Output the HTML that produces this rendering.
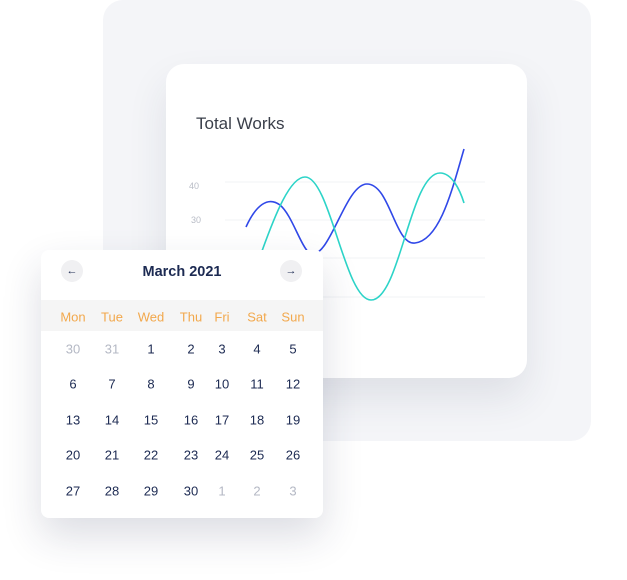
<!DOCTYPE html>
<html><head><style>
body{margin:0;width:627px;height:580px;background:#fff;position:relative;overflow:hidden;font-family:"Liberation Sans",sans-serif}
.bg{position:absolute;left:103px;top:0;width:488px;height:441px;background:#f4f5f8;border-radius:20px}
.chart{position:absolute;left:166px;top:64px;width:361px;height:314px;background:#fff;border-radius:18px;box-shadow:0 20px 40px rgba(40,45,80,.10)}
.title{position:absolute;left:196px;top:114px;font-size:17px;color:#3a3f4a}
.cal{position:absolute;left:41px;top:250px;width:282px;height:268px;background:#fff;border-radius:8px;box-shadow:0 18px 40px rgba(40,45,80,.16);overflow:hidden}
.wk{position:absolute;left:0;top:50px;width:282px;height:31px;background:#f5f5f5}
.t{position:absolute;transform:translate(-50%,-50%);font-size:13px;color:#1c2a52;white-space:nowrap}
.o{color:#f2a84c;font-size:13px}
.g{color:#b4b8c4}
.btn{position:absolute;width:22px;height:22px;border-radius:50%;background:#f0f0f2;font-size:11px;text-align:center;line-height:22px;color:#1c2a52}
</style></head><body>
<div class="bg"></div>
<div class="chart"></div>
<div class="title">Total Works</div>
<svg style="position:absolute;left:0;top:0" width="627" height="580">
<g stroke="#f4f5f7" stroke-width="1.2"><line x1="225" y1="182" x2="485" y2="182"/><line x1="225" y1="220" x2="485" y2="220"/><line x1="225" y1="258" x2="485" y2="258"/><line x1="225" y1="297" x2="485" y2="297"/></g>
<text x="189" y="189" font-size="9" fill="#b8bcc6" font-family="Liberation Sans">40</text>
<text x="191" y="223" font-size="9" fill="#b8bcc6" font-family="Liberation Sans">30</text>
<path d="M246,227 C256,205 268,196 280,205 C292,215 300,245 310,254 C330,260 345,184 367,184 C390,184 395,246 415,243 C440,240 452,190 464,149" fill="none" stroke="#3048e8" stroke-width="1.6"/>
<path d="M262,251 C275,215 290,177 305,177 C330,177 345,300 371,300 C400,300 410,173 440,173 C452,173 460,190 464,203" fill="none" stroke="#2dd4c8" stroke-width="1.6"/>
</svg>
<div class="cal">
<div class="wk"></div>
<div class="btn" style="left:20px;top:10px">←</div>
<div class="btn" style="left:239px;top:10px">→</div>
<div class="t" style="left:141px;top:22px;font-size:14.5px;font-weight:bold">March 2021</div>
</div>
<div id="d"></div>
<script>
var xs=[73,112,151,191,222,257,293],ys=[349,384,420,455,491];
var h='';['Mon','Tue','Wed','Thu','Fri','Sat','Sun'].forEach((w,i)=>h+='<div class="t o" style="left:'+xs[i]+'px;top:317px">'+w+'</div>');
var n=[30,31];for(var i=1;i<=30;i++)n.push(i);n.push(1,2,3);
n.slice(0,35).forEach((v,k)=>{var g=(k<2||k>31)?' g':'';h+='<div class="t'+g+'" style="left:'+xs[k%7]+'px;top:'+ys[Math.floor(k/7)]+'px">'+v+'</div>'});
document.getElementById('d').innerHTML=h;
</script>
</body></html>
